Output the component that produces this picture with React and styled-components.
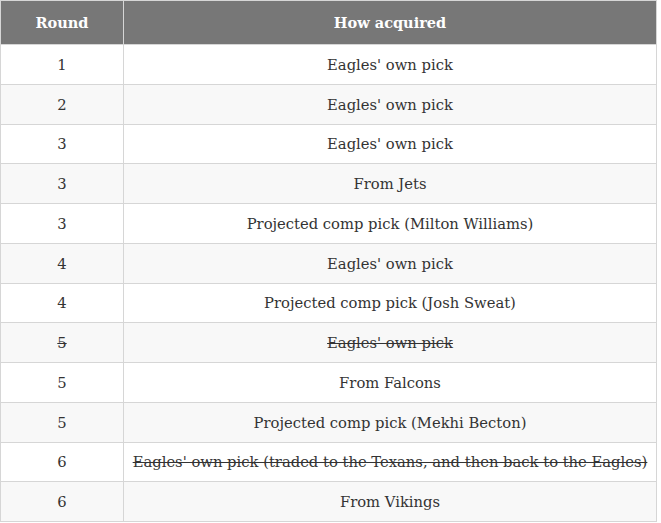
import styled, { createGlobalStyle } from "styled-components";

const GlobalStyle = createGlobalStyle`
  body {
    margin: 0;
    background: #ffffff;
    font-family: "DejaVu Serif", "Liberation Serif", serif;
  }
`;

const Table = styled.table`
  border-collapse: collapse;
  width: 657px;
  font-size: 14.75px;
  color: #333333;
`;

const HeadCell = styled.th`
  background-color: #777777;
  color: #ffffff;
  font-weight: 700;
  font-size: 14.5px;
  text-align: center;
  height: 43px;
  padding: 0 8px;
  border: 1px solid #d6d6d6;
  width: ${({ $w }) => $w || "auto"};
`;

const Row = styled.tr`
  background-color: ${({ $alt }) => ($alt ? "#f8f8f8" : "#ffffff")};
`;

const Cell = styled.td`
  text-align: center;
  height: 38.75px;
  padding: 0 8px;
  border: 1px solid #d6d6d6;
  text-decoration: ${({ $struck }) => ($struck ? "line-through" : "none")};
`;

const picks = [
  { round: 1, how: "Eagles' own pick" },
  { round: 2, how: "Eagles' own pick" },
  { round: 3, how: "Eagles' own pick" },
  { round: 3, how: "From Jets" },
  { round: 3, how: "Projected comp pick (Milton Williams)" },
  { round: 4, how: "Eagles' own pick" },
  { round: 4, how: "Projected comp pick (Josh Sweat)" },
  { round: 5, how: "Eagles' own pick", struck: true },
  { round: 5, how: "From Falcons" },
  { round: 5, how: "Projected comp pick (Mekhi Becton)" },
  {
    round: 6,
    how: "Eagles' own pick (traded to the Texans, and then back to the Eagles)",
    struck: true,
    roundPlain: true,
  },
  { round: 6, how: "From Vikings" },
];

function App() {
  return (
    <>
      <GlobalStyle />
      <Table>
        <thead>
          <tr>
            <HeadCell $w="106px">Round</HeadCell>
            <HeadCell>How acquired</HeadCell>
          </tr>
        </thead>
        <tbody>
          {picks.map((p, i) => (
            <Row key={i} $alt={i % 2 === 1}>
              <Cell $struck={p.struck && !p.roundPlain}>{p.round}</Cell>
              <Cell $struck={p.struck}>{p.how}</Cell>
            </Row>
          ))}
        </tbody>
      </Table>
    </>
  );
}

export default App;
